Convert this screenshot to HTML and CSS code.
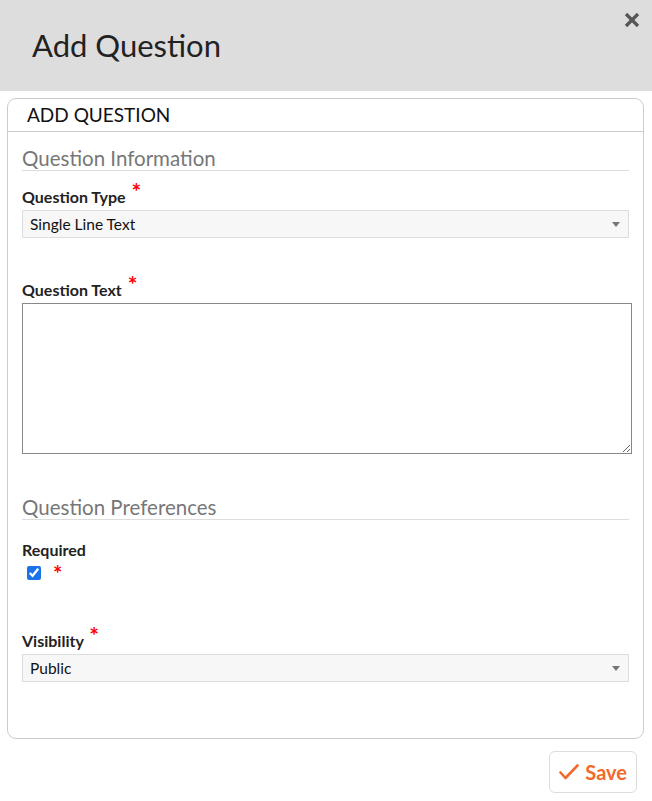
FILE: index.html
```html
<!DOCTYPE html>
<html lang="en">

<head>
    <meta charset="UTF-8">
    <title>Add Question</title>
    <link rel="stylesheet" href="styles.css">
</head>

<body>
    <div class="modal">
        <div class="modal-head">
            <h1>Add Question</h1>
            <svg class="close" width="16" height="16" viewBox="0 0 16 16">
                <path d="M2 2 L14 14 M14 2 L2 14" stroke="#555" stroke-width="3.2" fill="none" />
            </svg>
        </div>

        <div class="panel">
            <div class="panel-title">ADD QUESTION</div>
            <div class="panel-body">
                <h2 class="section">Question Information</h2>

                <div class="field">
                    <label>Question Type <span class="req">*</span></label>
                    <div class="select">
                        <span>Single Line Text</span>
                        <i class="caret"></i>
                    </div>
                </div>

                <div class="field field-text">
                    <label>Question Text <span class="req">*</span></label>
                    <textarea></textarea>
                </div>

                <h2 class="section section-pref">Question Preferences</h2>

                <div class="field field-check">
                    <label>Required</label>
                    <div class="check-row">
                        <input type="checkbox" checked>
                        <span class="req">*</span>
                    </div>
                </div>

                <div class="field field-vis">
                    <label>Visibility <span class="req">*</span></label>
                    <div class="select">
                        <span>Public</span>
                        <i class="caret"></i>
                    </div>
                </div>
            </div>
        </div>

        <div class="actions">
            <button class="save">
                <svg width="20" height="16" viewBox="0 0 20 16">
                    <path d="M1.5 8.5 L6.5 14 L18.5 1.5" fill="none" stroke="#f26a2b" stroke-width="2.6" stroke-linecap="round" stroke-linejoin="round" />
                </svg>
                Save
            </button>
        </div>
    </div>
</body>

</html>
```

FILE: styles.css
```css
* {
    box-sizing: border-box;
}

body,
h1,
h2 {
    margin: 0;
    padding: 0;
}

body {
    background: #fff;
    font-family: Lato, "Liberation Sans", sans-serif;
    color: #222;
}

.modal {
    width: 652px;
}

.modal-head {
    position: relative;
    height: 91px;
    background: #ddd;
    padding: 27px 0 0 32px;
}

.modal-head h1 {
    font-size: 31px;
    font-weight: 400;
    line-height: 36px;
    color: #222;
}

.close {
    position: absolute;
    top: 12px;
    right: 12px;
}

.panel {
    margin: 7px 8px 0 7px;
    border: 1px solid #ccc;
    border-radius: 9px;
    height: 641px;
}

.panel-title {
    height: 33px;
    padding: 4px 0 0 19px;
    font-size: 19px;
    line-height: 24px;
    color: #111;
    border-bottom: 1px solid #ccc;
}

.panel-body {
    padding: 15px 14px 0 14px;
}

.section {
    font-size: 20.5px;
    font-weight: 400;
    line-height: 22px;
    color: #777;
    border-bottom: 1px solid #ddd;
    padding-bottom: 1px;
}

.section-pref {
    margin-top: 42px;
}

.field {
    margin-top: 16px;
}

.field label {
    display: block;
    font-size: 16px;
    font-weight: 700;
    line-height: 20px;
    color: #222;
    margin-bottom: 3px;
}

.req {
    color: #f00;
    font-size: 23px;
    font-weight: 700;
    line-height: 0;
    position: relative;
    top: -3px;
    margin-left: 2px;
}

.select {
    display: flex;
    align-items: center;
    justify-content: space-between;
    height: 28px;
    padding: 0 8px 0 7px;
    background: #f7f7f7;
    border: 1px solid #ddd;
    font-size: 15.5px;
    color: #111;
}

.caret {
    width: 0;
    height: 0;
    border-left: 4px solid transparent;
    border-right: 4px solid transparent;
    border-top: 5px solid #777;
    margin-top: 1px;
}

.field-text {
    margin-top: 42px;
}

.field-text textarea {
    display: block;
    width: calc(100% + 3px);
    height: 151px;
    border: 1px solid #888;
    margin: 0;
    resize: vertical;
}

.field-check {
    margin-top: 20px;
}

.field-check label {
    margin-bottom: 6px;
}

.check-row {
    display: flex;
    align-items: flex-start;
    height: 16px;
}

.check-row input {
    width: 14px;
    height: 14px;
    margin: 0 0 0 5px;
    accent-color: #1a73e8;
}

.check-row .req {
    top: 0;
    line-height: 16px;
    font-size: 22px;
    margin-left: 12px;
}

.field-vis {
    margin-top: 49px;
}

.actions {
    display: flex;
    justify-content: flex-end;
    padding: 12px 15px 0 0;
}

.save {
    display: flex;
    align-items: center;
    gap: 6px;
    height: 42px;
    padding: 0 9px 0 9px;
    background: #fff;
    border: 1px solid #ddd;
    border-radius: 6px;
    font-family: Lato, "Liberation Sans", sans-serif;
    font-size: 20px;
    font-weight: 700;
    color: #f26a2b;
}
```
